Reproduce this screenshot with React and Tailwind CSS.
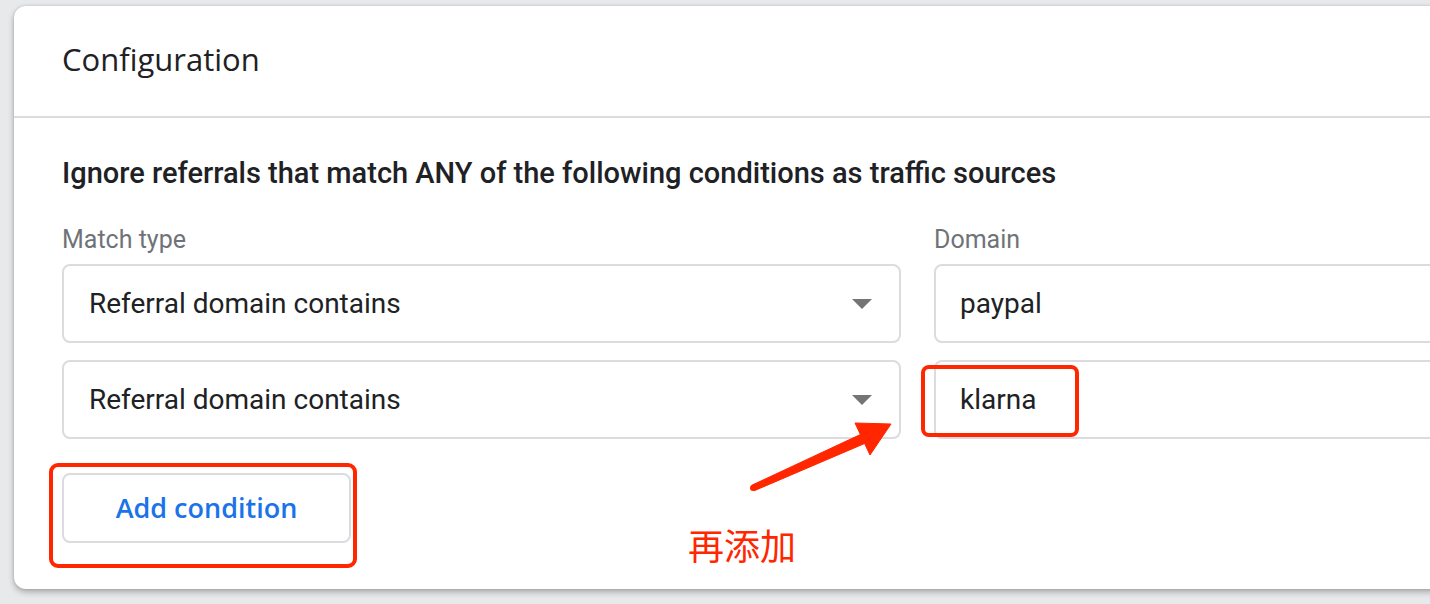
import React from 'react';

const rows = [
  { type: 'Referral domain contains', domain: 'paypal' },
  { type: 'Referral domain contains', domain: 'klarna' },
];

const Caret = () => (
  <svg width="20" height="10" viewBox="0 0 20 10" className="shrink-0">
    <path d="M0 0 L20 0 L10 10 Z" fill="#757575" />
  </svg>
);

export default function App() {
  return (
    <div className="relative w-[1430px] h-[604px] overflow-hidden bg-[#e8e9eb] pl-[14px] pt-[6px] font-['Roboto',sans-serif]">
      {/* Card */}
      <div className="w-[1800px] h-[583px] bg-white rounded-l-[12px] shadow-[0_3px_6px_rgba(0,0,0,0.28),0_0_3px_rgba(0,0,0,0.12)]">
        <div className="h-[112px] flex items-center px-[48px] border-b-2 border-[#dadce0]">
          <h1 className="text-[31px] leading-[36px] text-[#202124] font-['Open_Sans',sans-serif] -mt-[4px]">
            Configuration
          </h1>
        </div>

        <div className="px-[48px] pt-[38px]">
          <h2 className="text-[29px] leading-[34px] font-medium text-[#202124]">
            Ignore referrals that match ANY of the following conditions as traffic sources
          </h2>

          <div className="grid grid-cols-[839px_839px] gap-x-[33px] mt-[36px]">
            <div className="text-[25px] leading-[28px] text-[#6f7378] mb-[10px]">Match type</div>
            <div className="text-[25px] leading-[28px] text-[#6f7378] mb-[10px]">Domain</div>

            {rows.map((r, i) => (
              <React.Fragment key={i}>
                <div className={`h-[79px] flex items-center justify-between pl-[25px] pr-[27px] border-2 border-[#dadce0] rounded-[8px] ${i > 0 ? 'mt-[17px]' : ''}`}>
                  <span className="text-[28px] text-[#202124]">{r.type}</span>
                  <Caret />
                </div>
                <div className={`h-[79px] flex items-center pl-[24px] border-2 border-[#dadce0] rounded-[8px] ${i > 0 ? 'mt-[17px]' : ''}`}>
                  <span className="text-[28px] text-[#202124]">{r.domain}</span>
                </div>
              </React.Fragment>
            ))}
          </div>

          <button className="mt-[34px] w-[289px] h-[70px] flex items-center justify-center border-2 border-[#dadce0] rounded-[8px] text-[27px] font-semibold text-[#1a73e8] font-['Open_Sans',sans-serif]">
            Add condition
          </button>
        </div>
      </div>

      {/* Annotations */}
      <div className="absolute left-[921px] top-[365px] w-[158px] h-[72px] border-4 border-[#ff2600] rounded-[8px]" />
      <div className="absolute left-[49px] top-[463px] w-[308px] h-[105px] border-4 border-[#ff2600] rounded-[9px]" />
      <svg className="absolute left-0 top-0" width="1430" height="604" viewBox="0 0 1430 604">
        <path d="M751.7 485.3 L860.4 434.5 L855 423 L891 424 L870 455 L864.6 443.5 L754.3 490.7 Z" fill="#ff2600" stroke="#ff2600" strokeWidth="1" strokeLinejoin="round" />
        <circle cx="753" cy="488" r="3" fill="#ff2600" />
      </svg>
      <div className="absolute left-[688px] top-[524px] text-[36px] leading-[40px] text-[#ff2600] font-['Noto_Sans_CJK_SC',sans-serif]">
        再添加
      </div>
    </div>
  );
}
